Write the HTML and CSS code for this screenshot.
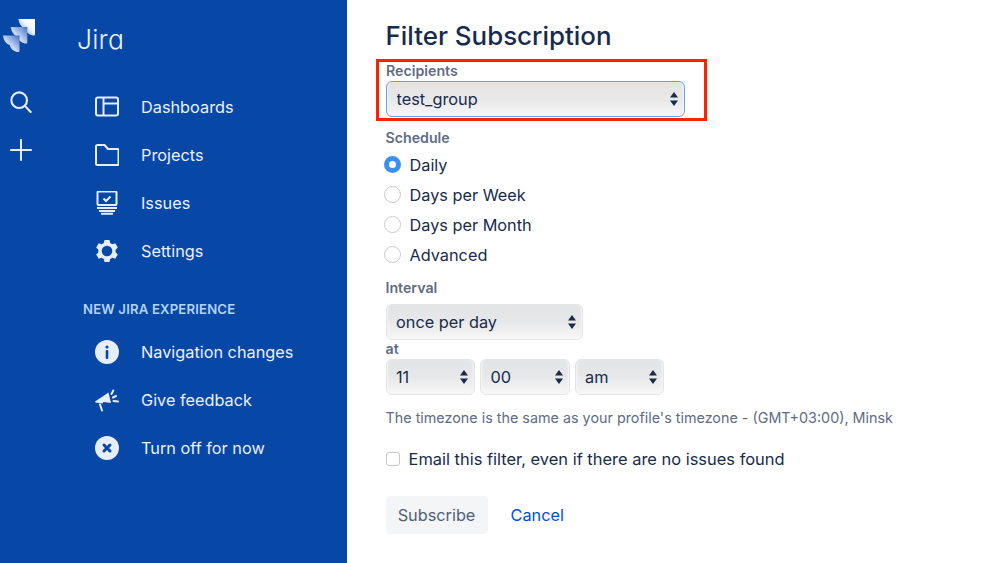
FILE: index.html
```html
<!DOCTYPE html>
<html lang="en">
<head>
<meta charset="utf-8">
<title>Filter Subscription</title>
<link rel="stylesheet" href="styles.css">
</head>
<body>
<div class="app">
  <aside class="side">
    <div class="rail">
      <svg class="logo" viewBox="0 0 33 33" width="33" height="33">
        <defs>
          <linearGradient id="lg1" x1="0" y1="1" x2="1" y2="0">
            <stop offset="0.15" stop-color="#8fabe3"/>
            <stop offset="0.6" stop-color="#f4f7fd"/>
            <stop offset="1" stop-color="#ffffff"/>
          </linearGradient>
          <linearGradient id="lg2" x1="1" y1="0" x2="0" y2="1">
            <stop offset="0" stop-color="#3f6fc6"/>
            <stop offset="0.55" stop-color="#c5d5f2"/>
            <stop offset="1" stop-color="#ffffff"/>
          </linearGradient>
          <path id="piece" d="M0 0H16.500V15.500Q16.500 16.500 15.500 16.500H14C10 15.500 7.500 13 6.800 9.500C3 8.500 .5 4.500 0 0z"/>
        </defs>
        <use href="#piece" x="15.500" y="0" fill="url(#lg1)"/>
        <use href="#piece" x="7.800" y="8" fill="url(#lg2)"/>
        <use href="#piece" x="0" y="16.500" fill="url(#lg2)"/>
      </svg>
      <svg class="rail-ico" viewBox="0 0 24 24" width="22" height="22" fill="none" stroke="#e6eefc" stroke-width="2.300" stroke-linecap="round">
        <circle cx="10" cy="10" r="8.500"/><path d="M16.500 16.500l6 6.300"/>
      </svg>
      <svg class="rail-ico" viewBox="0 0 24 24" width="22" height="22" fill="none" stroke="#e6eefc" stroke-width="2.200" stroke-linecap="round">
        <path d="M12 1v22M1 12h22"/>
      </svg>
    </div>
    <nav class="nav">
      <div class="brand">Jira</div>
      <ul class="list">
        <li class="row">
          <svg class="ico" viewBox="0 0 24 24" fill="none" stroke="#e6eefc" stroke-width="2">
            <rect x="1" y="2.500" width="22" height="18" rx="2"/><path d="M8.500 2.500v18M8.500 8.500h14.500"/>
          </svg>Dashboards</li>
        <li class="row">
          <svg class="ico" viewBox="0 0 24 24" fill="none" stroke="#e6eefc" stroke-width="2" stroke-linejoin="round">
            <path d="M1 3.500a1.500 1.500 0 0 1 1.500-1.500h7l3.500 4h9.500a1 1 0 0 1 1 1v14a1 1 0 0 1-1 1H2.500a1.500 1.500 0 0 1-1.500-1.500z"/>
          </svg>Projects</li>
        <li class="row">
          <svg class="ico" viewBox="0 0 24 24" fill="none" stroke="#e6eefc" stroke-width="2">
            <rect x="2.500" y="0.500" width="19" height="13.500" rx="1"/><path d="M2 17h20M4 20h16M6 22.800h12"/><path d="M8.500 7.500l2.500 2.500 4.500-4.500" stroke-width="2"/>
          </svg>Issues</li>
        <li class="row">
          <svg class="ico" viewBox="0 0 24 24">
            <path fill="#e6eefc" fill-rule="evenodd" d="M9.500 1h5l.7 3 2.200 1.200 2.900-.9 2.500 4.300-2.200 2.100v2.600l2.200 2.100-2.500 4.300-2.900-.9-2.200 1.200-.7 3h-5l-.7-3-2.200-1.200-2.900.9-2.500-4.300 2.200-2.100v-2.600L1.200 8.600l2.500-4.300 2.900.9L8.800 4zM12 6.700a5.300 5.300 0 1 0 0 10.600 5.300 5.300 0 0 0 0-10.600z"/>
          </svg>Settings</li>
      </ul>
      <h2 class="section">NEW JIRA EXPERIENCE</h2>
      <ul class="list">
        <li class="row">
          <svg class="ico" viewBox="0 0 24 24">
            <circle cx="12" cy="12" r="12" fill="#e6eefc"/><rect x="10.700" y="10" width="2.600" height="9" rx="1" fill="#0747a6"/><circle cx="12" cy="7" r="1.600" fill="#0747a6"/>
          </svg>Navigation changes</li>
        <li class="row">
          <svg class="ico" viewBox="0 0 24 24" fill="none">
            <path d="M0 13.500L13.500 4.500l2.500 10.500-7.500-1-1 1.500-7-1z" fill="#e6eefc"/>
            <path d="M5 16.500l2 6M16.500 6l1.800-3.500M18 9.500l3-1.500M18.500 13l4.500.5" stroke="#e6eefc" stroke-width="2" stroke-linecap="round"/>
          </svg>Give feedback</li>
        <li class="row">
          <svg class="ico" viewBox="0 0 24 24">
            <circle cx="12" cy="12" r="12" fill="#e6eefc"/><path d="M9 9l6 6M15 9l-6 6" stroke="#0747a6" stroke-width="3" stroke-linecap="round"/>
          </svg>Turn off for now</li>
      </ul>
    </nav>
  </aside>
  <main class="main">
    <h1 class="title">Filter Subscription</h1>
    <form class="form">
      <div class="recipients">
        <label class="lbl" for="rcp">Recipients</label>
        <div class="sel sel-focus sel-wide">
          <select id="rcp"><option>test_group</option></select>
          <svg class="arrows" viewBox="0 0 8 14" width="8" height="14"><path d="M4 0l4 5.500H0zM4 14L0 8.500h8z"/></svg>
        </div>
      </div>
      <div class="lbl lbl-schedule">Schedule</div>
      <div class="radios">
        <label class="radio"><input type="radio" name="s" checked><span>Daily</span></label>
        <label class="radio"><input type="radio" name="s"><span>Days per Week</span></label>
        <label class="radio"><input type="radio" name="s"><span>Days per Month</span></label>
        <label class="radio"><input type="radio" name="s"><span>Advanced</span></label>
      </div>
      <label class="lbl lbl-interval" for="itv">Interval</label>
      <div class="sel sel-interval">
        <select id="itv"><option>once per day</option></select>
        <svg class="arrows" viewBox="0 0 8 14" width="8" height="14"><path d="M4 0l4 5.500H0zM4 14L0 8.500h8z"/></svg>
      </div>
      <div class="lbl lbl-at">at</div>
      <div class="times">
        <div class="sel sel-time">
          <select aria-label="hour"><option>11</option></select>
          <svg class="arrows" viewBox="0 0 8 14" width="8" height="14"><path d="M4 0l4 5.500H0zM4 14L0 8.500h8z"/></svg>
        </div>
        <div class="sel sel-time">
          <select aria-label="minute"><option>00</option></select>
          <svg class="arrows" viewBox="0 0 8 14" width="8" height="14"><path d="M4 0l4 5.500H0zM4 14L0 8.500h8z"/></svg>
        </div>
        <div class="sel sel-time">
          <select aria-label="meridiem"><option>am</option></select>
          <svg class="arrows" viewBox="0 0 8 14" width="8" height="14"><path d="M4 0l4 5.500H0zM4 14L0 8.500h8z"/></svg>
        </div>
      </div>
      <p class="hint">The timezone is the same as your profile's timezone - (GMT+03:00), Minsk</p>
      <label class="check"><input type="checkbox"><span>Email this filter, even if there are no issues found</span></label>
      <div class="actions">
        <button type="button" class="btn">Subscribe</button>
        <a class="cancel" href="#">Cancel</a>
      </div>
    </form>
  </main>
</div>
</body>
</html>
```

FILE: styles.css
```css
* { box-sizing: border-box; }
html, body { margin: 0; height: 100%; }
body {
  font-family: Inter, "Liberation Sans", sans-serif;
  color: #172b4d;
  background: #fff;
  overflow: hidden;
}
.app { display: flex; height: 563px; }

.side {
  width: 347px;
  flex: none;
  background: #0747a6;
  color: #ebf1fd;
  display: flex;
}
.rail {
  width: 41px;
  flex: none;
  display: flex;
  flex-direction: column;
  align-items: center;
  padding-top: 19px;
}
.logo { display: block; margin-left: -2px; }
.rail-ico { display: block; margin-bottom: 26px; }
.logo + .rail-ico { margin-top: 39px; }

.nav { flex: 1; padding-left: 54px; }
.brand {
  font-size: 26.500px;
  font-weight: 300;
  line-height: 32px;
  margin: 23px 0 0 -18px;
  letter-spacing: .2px;
  font-feature-settings: "cv11";
}
.list { list-style: none; margin: 0; padding: 0; }
.brand + .list { margin-top: 28px; }
.row {
  display: flex;
  align-items: center;
  height: 48px;
  font-size: 16.300px;
}
.ico { width: 24px; height: 24px; margin-right: 22px; flex: none; }
.section {
  margin: 26px 0 0 -12px;
  font-size: 13.200px;
  line-height: 16px;
  font-weight: 600;
  letter-spacing: .15px;
  color: #b3d4ff;
  height: 27px;
}

.main { flex: 1; padding-left: 38.500px; }
.title {
  margin: 19px 0 0;
  font-size: 25.900px;
  line-height: 34px;
  font-weight: 550;
  color: #172b4d;
}
.lbl {
  display: block;
  font-size: 14.200px;
  line-height: 18px;
  font-weight: 600;
  color: #5e6c84;
}
.recipients {
  border: 3px solid #ff2200;
  width: 331px;
  height: 62px;
  margin: 6px 0 0 -10px;
  padding: 0 0 0 7.500px;
}
.sel { position: relative; height: 36px; }
.sel select {
  appearance: none;
  -webkit-appearance: none;
  width: 100%;
  height: 100%;
  margin: 0;
  padding: 0 24px 0 9.500px;
  font: 400 16.300px Inter, "Liberation Sans", sans-serif;
  color: #172b4d;
  border: 1px solid #e3e4e6;
  border-radius: 6px;
  background: linear-gradient(#e3e4e6 0%, #e6e7e8 45%, #f1f1f2 80%, #f8f8f8 100%);
  box-shadow: inset 2px 0 2px -1px #f7f7f7, inset -2px 0 2px -1px #f7f7f7;
}
.sel-focus select {
  border: 1.500px solid #5fa2f7;
  background: linear-gradient(#e4e4e5 0%, #e8e8e9 50%, #f7f7f7 100%);
}
.arrows { position: absolute; right: 7px; top: 11px; fill: #172b4d; }
.sel-wide { width: 299px; margin-top: 1px; }
.lbl-schedule { margin-top: 8px; }
.radios { margin-top: 2.500px; }
.radio {
  display: flex;
  align-items: center;
  height: 30px;
  font-size: 16.300px;
}
.radio input {
  appearance: none;
  -webkit-appearance: none;
  width: 17px;
  height: 17px;
  margin: 0 8.500px 0 -1.500px;
  border-radius: 50%;
  border: 1px solid #c9c9c9;
  background: #fff;
  flex: none;
}
.radio input:checked {
  border: 5.500px solid #3b90f7;
  background: #fff;
}
.lbl-interval { margin-top: 9.500px; }
.sel-interval { width: 197.500px; margin-top: 7px; }
.lbl-at { height: 19px; }
.times { display: flex; gap: 5px; }
.sel-time { width: 89.500px; }
.hint {
  margin: 13px 0 0;
  font-size: 14.350px;
  line-height: 20px;
  color: #5e6c84;
}
.check {
  display: flex;
  align-items: center;
  margin-top: 19px;
  height: 24px;
  font-size: 16.450px;
}
.check input {
  appearance: none;
  -webkit-appearance: none;
  width: 14px;
  height: 14px;
  margin: 0 9px 0 0;
  border: 1px solid #c9c9c9;
  border-radius: 3px;
  background: #fff;
  flex: none;
}
.actions { display: flex; align-items: center; margin-top: 25px; gap: 23px; }
.btn {
  height: 38px;
  width: 102px;
  padding: 0;
  border: 0;
  border-radius: 4px;
  background: #f4f5f7;
  color: #505f79;
  font: 400 16.300px Inter, "Liberation Sans", sans-serif;
}
.cancel { font-size: 16.300px; color: #0052cc; text-decoration: none; }
```
